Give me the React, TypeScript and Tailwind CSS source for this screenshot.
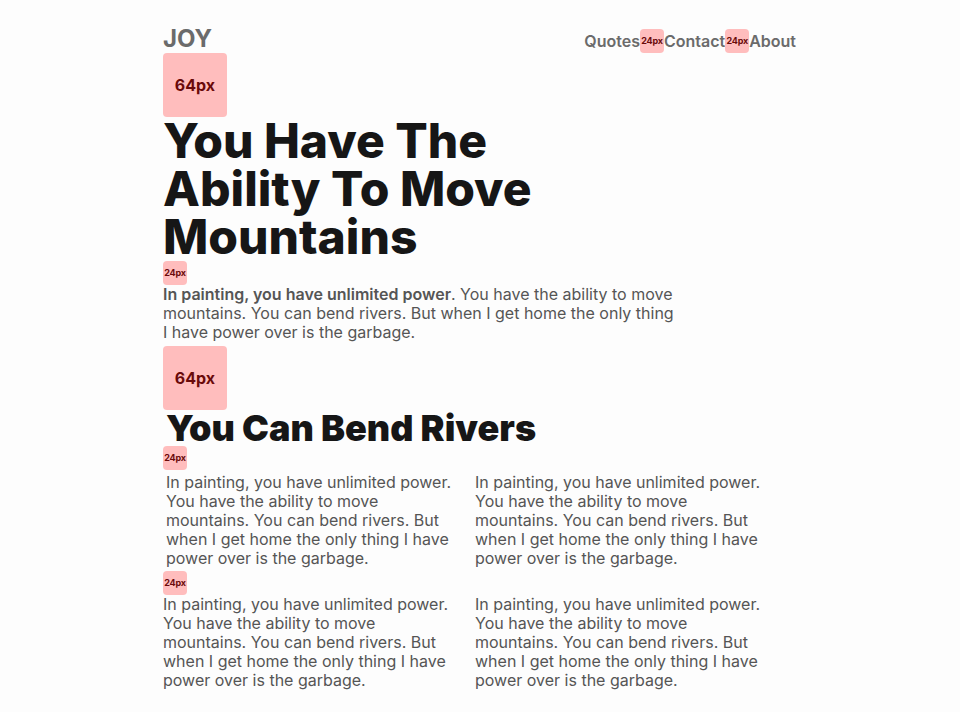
import React from "react";

// pink placeholder that marks a vertical/horizontal gap
function Spacer({ size }: { size: 24 | 64 }) {
  if (size === 64) {
    return (
      <div className="flex h-16 w-16 shrink-0 items-center justify-center rounded-[4px] bg-[#ffbdbd] text-[16px] font-bold text-[#6a0a0a]">
        64px
      </div>
    );
  }
  return (
    <div className="flex h-6 w-6 shrink-0 items-center justify-center rounded-[4px] bg-[#ffbdbd] text-[9px] font-bold tracking-[-0.2px] text-[#6a0a0a]">
      24px
    </div>
  );
}

const copy =
  "In painting, you have unlimited power. You have the ability to move mountains. You can bend rivers. But when I get home the only thing I have power over is the garbage.";

export default function App() {
  return (
    <div className="min-h-[712px] bg-[#fdfdfd] font-['Inter',sans-serif]">
      <div className="mx-auto w-[634px] pt-[29px]">
        <header className="flex h-6 justify-between">
          <div className="-mt-[2px] text-[24px] leading-[24px] font-bold text-[#6b6b6b]">
            JOY
          </div>
          <nav className="mr-px flex items-center text-[16px] leading-[24px] font-semibold text-[#6b6b6b]">
            <a href="#">Quotes</a>
            <Spacer size={24} />
            <a href="#">Contact</a>
            <Spacer size={24} />
            <a href="#">About</a>
          </nav>
        </header>

        <Spacer size={64} />
        <h1 className="max-w-[420px] text-[48px] leading-[48px] font-extrabold text-[#161616]">
          You Have The Ability To Move Mountains
        </h1>
        <Spacer size={24} />
        <p className="mb-1 max-w-lg text-[16px] leading-[19px] text-[#555]">
          <strong className="font-semibold">
            In painting, you have unlimited power
          </strong>
          . You have the ability to move mountains. You can bend rivers. But
          when I get home the only thing I have power over is the garbage.
        </p>

        <Spacer size={64} />
        <h2 className="pl-[3px] text-[36px] leading-[36px] font-black text-[#161616]">
          You Can Bend Rivers
        </h2>
        <Spacer size={24} />
        <div className="grid grid-cols-[289px_289px] gap-x-5 py-[3px] pl-[3px] text-[16px] leading-[19px] text-[#555]">
          <p>{copy}</p>
          <p>{copy}</p>
        </div>
        <Spacer size={24} />
        <div className="grid grid-cols-[290px_290px] gap-x-[22px] text-[16px] leading-[19px] text-[#555]">
          <p>{copy}</p>
          <p>{copy}</p>
        </div>
      </div>
    </div>
  );
}
